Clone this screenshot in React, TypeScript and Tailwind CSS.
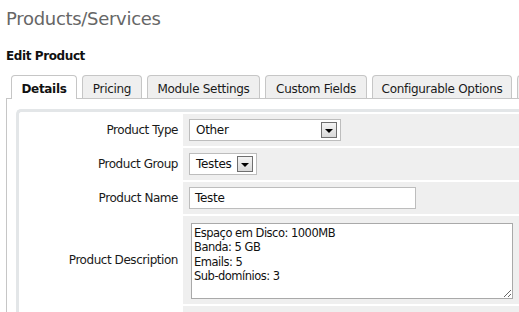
// Edit product form (admin panel)

const tabs = [
  { label: "Details", w: "w-[66px]", active: true },
  { label: "Pricing", w: "w-[60px]" },
  { label: "Module Settings", w: "w-[113px]" },
  { label: "Custom Fields", w: "w-[102px]" },
  { label: "Configurable Options", w: "w-[140px]" },
  { label: "", w: "w-[90px]" },
]

function DropButton() {
  return (
    <span className="w-[16px] h-[16px] border border-[#6f6f6f] bg-gradient-to-b from-[#f4f4f4] to-[#d9d9d9] flex items-center justify-center shrink-0">
      <span className="w-0 h-0 border-l-[4px] border-r-[4px] border-t-[4px] border-l-transparent border-r-transparent border-t-black mt-[1px]" />
    </span>
  )
}

function FakeSelect({ value, width }: { value: string; width: string }) {
  return (
    <div className={`${width} h-[22px] border border-[#bdbdbd] bg-white flex items-center justify-between pl-[6px] pr-[3px]`}>
      <span className="text-[#111] leading-none">{value}</span>
      <DropButton />
    </div>
  )
}

function Row({ label, children, tall }: { label: string; children?: React.ReactNode; tall?: boolean }) {
  return (
    <div className={`flex gap-[2px] ${tall ? "h-[88px]" : "h-[32px]"}`}>
      <div className="w-[160px] shrink-0 bg-white flex items-center justify-end pr-[3px] text-[#1a1a1a] tracking-[-0.45px]">{label}</div>
      <div className={`grow bg-[#efefef] flex pl-[6px] ${tall ? "items-start pt-[7px]" : "items-center"}`}>{children}</div>
    </div>
  )
}

export default function App() {
  return (
    <div className="w-[519px] h-[312px] overflow-hidden bg-white font-['DejaVu_Sans',sans-serif] text-[12px] tracking-[-0.3px]">
      <div className="w-[640px] pl-[6px]">
        <h1 className="pt-[8px] text-[18px] leading-[21px] text-[#666] tracking-[-0.3px]">Products/Services</h1>
        <h2 className="mt-[20px] font-bold leading-[14px] text-[#111] tracking-[-0.4px]">Edit Product</h2>

        <div className="mt-[12px] flex items-end gap-[5px] pl-[5px] border-b border-[#c6c6c6]">
          {tabs.map((t, key) =>
            t.active ? (
              <div key={key} className={`${t.w} shrink-0 h-[24px] -mb-px pt-[6px] text-center leading-[14px] font-bold text-[#111] bg-white border border-b-0 border-[#c6c6c6] rounded-t-[4px]`}>
                {t.label}
              </div>
            ) : (
              <div key={key} className={`${t.w} shrink-0 h-[23px] pt-[6px] text-center leading-[14px] text-[#1a1a1a] bg-[#efefef] border border-b-0 border-[#c6c6c6] rounded-t-[4px]`}>
                {t.label}
              </div>
            )
          )}
        </div>

        <div className="border-l border-[#c6c6c6] pl-[9px] pt-[10px]">
          <div className="border-l-[3px] border-t-[3px] border-[#e3e6e8] rounded-tl-[5px] p-[2px] flex flex-col gap-[2px]">
            <Row label="Product Type">
              <FakeSelect value="Other" width="w-[152px]" />
            </Row>
            <Row label="Product Group">
              <FakeSelect value="Testes" width="w-[68px]" />
            </Row>
            <Row label="Product Name">
              <div className="w-[227px] h-[22px] border border-[#bdbdbd] bg-white flex items-center pl-[5px] text-[#111]">Teste</div>
            </Row>
            <Row label="Product Description" tall>
              <textarea
                className="ml-[2px] w-[322px] h-[76px] border border-[#a9a9a9] bg-white px-[2px] pt-[2px] leading-[14.3px] text-[#111] outline-none font-['DejaVu_Sans',sans-serif] text-[11.5px] tracking-[-0.5px]"
                defaultValue={"Espaço em Disco: 1000MB\nBanda: 5 GB\nEmails: 5\nSub-domínios: 3"}
              />
            </Row>
            <Row label="" />
          </div>
        </div>
      </div>
    </div>
  )
}
